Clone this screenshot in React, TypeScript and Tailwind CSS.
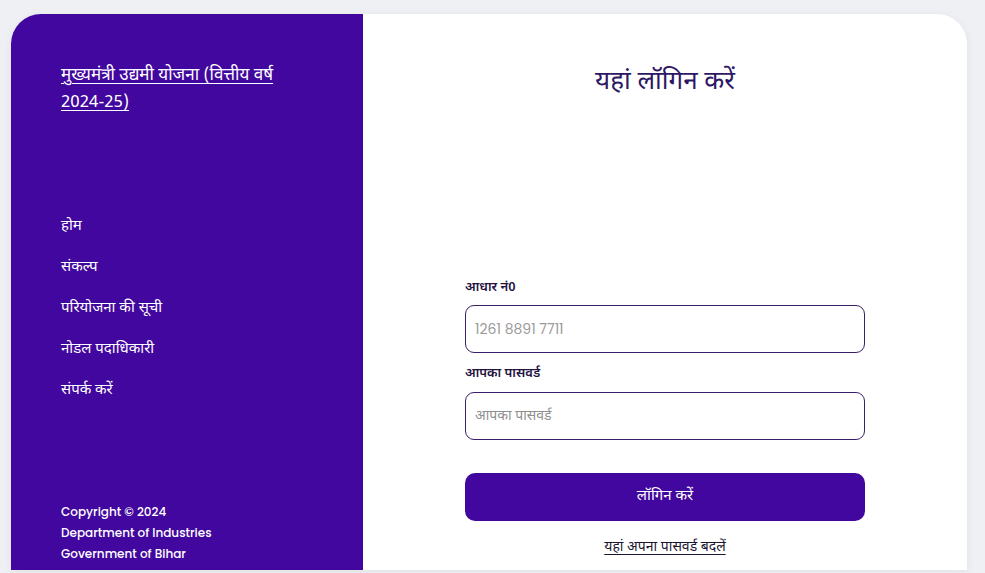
import React from "react";

const navItems = ["होम", "संकल्प", "परियोजना की सूची", "नोडल पदाधिकारी", "संपर्क करें"];

const hindi = { fontFamily: '"Noto Sans Devanagari", "Noto Sans", "Liberation Sans", sans-serif' };
const latin = { fontFamily: 'Poppins, Inter, "Noto Sans", sans-serif' };

export default function App() {
  return (
    <div className="min-h-[573px] w-full bg-[#eef0f4] pt-[14px] pl-[11px] pr-[18px] overflow-hidden" style={hindi}>
      <div className="flex h-[556px] w-[956px] rounded-t-[30px] overflow-hidden bg-white shadow-[0_2px_10px_rgba(0,0,0,0.06)]">
        {/* Sidebar */}
        <div className="w-[352px] shrink-0 bg-[#41079e] text-white flex flex-col px-[50px] pt-[49px] pb-[6px]">
          <a href="#" className="text-[17px] leading-[27px] underline underline-offset-[3px] decoration-1 w-[252px]">
            मुख्यमंत्री उद्यमी योजना (वित्तीय वर्ष 2024-25)
          </a>
          <nav className="mt-[98px] flex flex-col gap-[17px]">
            {navItems.map((n) => (
              <a key={n} href="#" className="text-[15px] leading-[24px]">
                {n}
              </a>
            ))}
          </nav>
          <div className="mt-auto text-[12px] leading-[21px] font-medium" style={latin}>
            <div>Copyright © 2024</div>
            <div>Department of Industries</div>
            <div>Government of Bihar</div>
          </div>
        </div>

        {/* Login */}
        <div className="flex-1 flex flex-col items-center pt-[51px]">
          <h2 className="text-[26px] leading-[36px] text-[#2e1764]">यहां लॉगिन करें</h2>
          <form className="mt-[178px] w-[400px] flex flex-col" onSubmit={(e) => e.preventDefault()}>
            <label className="text-[13px] leading-[18px] font-semibold text-[#24123f] mb-[8px]">आधार नं0</label>
            <input
              type="text"
              placeholder="1261 8891 7711"
              className="h-[48px] rounded-[9px] border border-[#3a1f6b] px-[9px] text-[14px] placeholder:text-[#9a9a9a] outline-none"
              style={latin}
            />
            <label className="mt-[12px] text-[13px] leading-[18px] font-semibold text-[#24123f] mb-[9px]">आपका पासवर्ड</label>
            <input
              type="password"
              placeholder="आपका पासवर्ड"
              className="h-[48px] rounded-[9px] border border-[#3a1f6b] px-[9px] text-[14px] placeholder:text-[#8f8f8f] outline-none"
            />
            <button
              type="submit"
              className="mt-[33px] h-[48px] rounded-[10px] bg-[#41079e] text-white text-[15px]"
            >
              लॉगिन करें
            </button>
            <a href="#" className="mt-[17px] self-center text-[14px] leading-[20px] text-[#1a1530] underline underline-offset-[3px]">
              यहां अपना पासवर्ड बदलें
            </a>
          </form>
        </div>
      </div>
    </div>
  );
}
